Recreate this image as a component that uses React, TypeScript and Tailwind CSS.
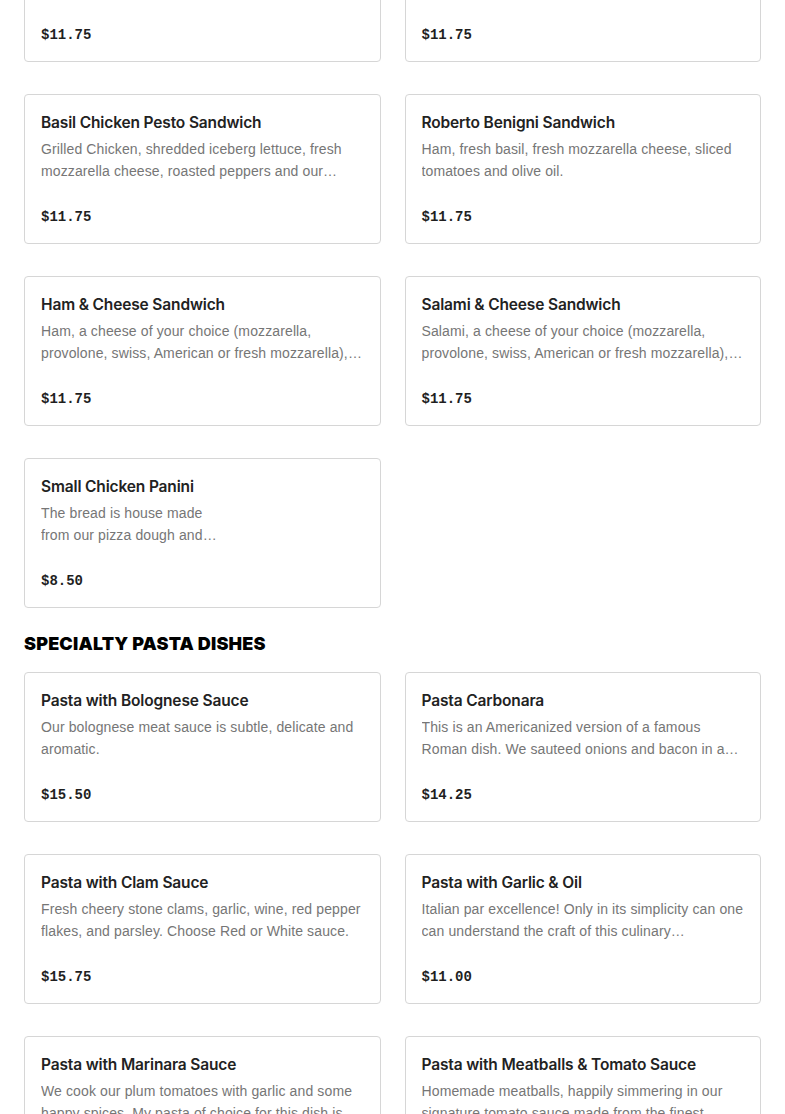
import React from "react";

type Item = { name: string; desc: string; price: string };

const sandwiches: Item[] = [
  { name: "Italian Combo Sandwich", desc: "Ham, salami, provolone cheese, lettuce, tomatoes and our house dressing.", price: "$11.75" },
  { name: "Meatball Parmigiana Sandwich", desc: "Homemade meatballs with tomato sauce and melted mozzarella cheese.", price: "$11.75" },
  { name: "Basil Chicken Pesto Sandwich", desc: "Grilled Chicken, shredded iceberg lettuce, fresh mozzarella cheese, roasted peppers and our homemade basil pesto.", price: "$11.75" },
  { name: "Roberto Benigni Sandwich", desc: "Ham, fresh basil, fresh mozzarella cheese, sliced tomatoes and olive oil.", price: "$11.75" },
  { name: "Ham & Cheese Sandwich", desc: "Ham, a cheese of your choice (mozzarella, provolone, swiss, American or fresh mozzarella), lettuce and tomatoes.", price: "$11.75" },
  { name: "Salami & Cheese Sandwich", desc: "Salami, a cheese of your choice (mozzarella, provolone, swiss, American or fresh mozzarella), lettuce and tomatoes.", price: "$11.75" },
  { name: "Small Chicken Panini", desc: "The bread is house made\nfrom our pizza dough and\nbaked fresh every day in our oven.", price: "$8.50" },
];

const pasta: Item[] = [
  { name: "Pasta with Bolognese Sauce", desc: "Our bolognese meat sauce is subtle, delicate and aromatic.", price: "$15.50" },
  { name: "Pasta Carbonara", desc: "This is an Americanized version of a famous Roman dish. We sauteed onions and bacon in a creamy egg sauce.", price: "$14.25" },
  { name: "Pasta with Clam Sauce", desc: "Fresh cheery stone clams, garlic, wine, red pepper flakes, and parsley. Choose Red or White sauce.", price: "$15.75" },
  { name: "Pasta with Garlic & Oil", desc: "Italian par excellence! Only in its simplicity can one can understand the craft of this culinary masterpiece.", price: "$11.00" },
  { name: "Pasta with Marinara Sauce", desc: "We cook our plum tomatoes with garlic and some happy spices. My pasta of choice for this dish is spaghetti.", price: "$15.75" },
  { name: "Pasta with Meatballs & Tomato Sauce", desc: "Homemade meatballs, happily simmering in our signature tomato sauce made from the finest tomatoes.", price: "$15.75" },
];

function Card({ item }: { item: Item }) {
  return (
    <div className="flex h-[150px] flex-col rounded-[4px] border border-[#d6d6d6] bg-white px-4 pt-4 pb-4">
      <div
        className="text-[15.5px] leading-[24px] font-semibold tracking-[-0.15px] text-[#222222]"
        style={{ fontFamily: "Inter, 'Noto Sans', sans-serif" }}
      >
        {item.name}
      </div>
      <div
        className="mt-[3px] line-clamp-2 whitespace-pre-line text-[14px] leading-[22px] tracking-[0.12px] text-[#767676]"
        style={{ fontFamily: "'Liberation Sans', Arial, sans-serif" }}
      >
        {item.desc}
      </div>
      <div
        className="mt-auto text-[14px] leading-[20px] font-bold text-[#1f1f1f]"
        style={{ fontFamily: "'Liberation Mono', monospace" }}
      >
        {item.price}
      </div>
    </div>
  );
}

export default function App() {
  return (
    <div className="min-h-screen overflow-hidden bg-white">
      <div className="-mt-[88px] px-6 pb-10">
        <div className="grid grid-cols-2 gap-x-6 gap-y-8">
          {sandwiches.map((it) => (
            <Card key={it.name} item={it} />
          ))}
        </div>
        <h2
          className="mt-[24px] mb-[16px] text-[18px] leading-[24px] font-black tracking-[0.01em] text-black"
          style={{ fontFamily: "Inter, 'Liberation Sans', sans-serif" }}
        >
          SPECIALTY PASTA DISHES
        </h2>
        <div className="grid grid-cols-2 gap-x-6 gap-y-8">
          {pasta.map((it) => (
            <Card key={it.name} item={it} />
          ))}
        </div>
      </div>
    </div>
  );
}
